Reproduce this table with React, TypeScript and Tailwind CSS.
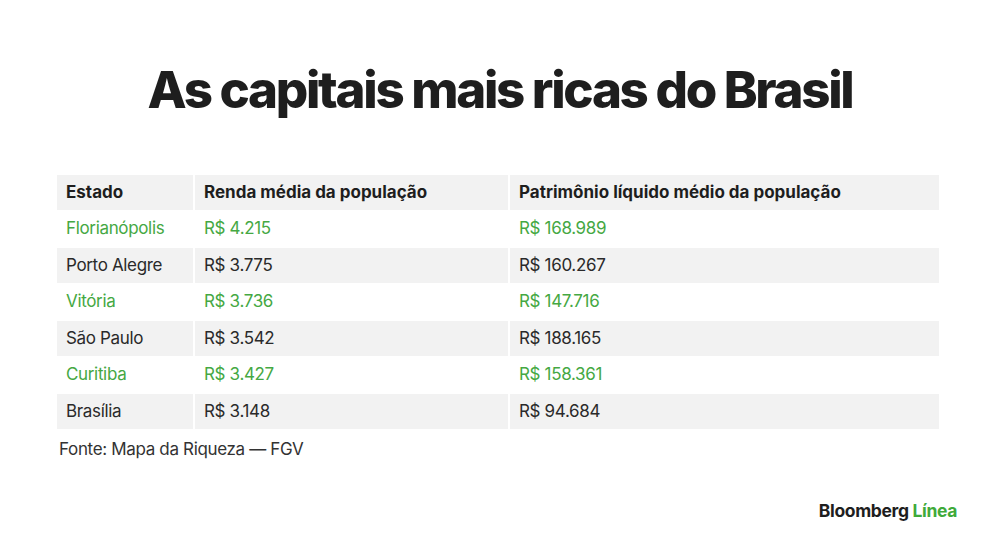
import React from "react";

const ROWS = [
  { estado: "Florianópolis", renda: "R$ 4.215", patrimonio: "R$ 168.989", green: true },
  { estado: "Porto Alegre", renda: "R$ 3.775", patrimonio: "R$ 160.267", green: false },
  { estado: "Vitória", renda: "R$ 3.736", patrimonio: "R$ 147.716", green: true },
  { estado: "São Paulo", renda: "R$ 3.542", patrimonio: "R$ 188.165", green: false },
  { estado: "Curitiba", renda: "R$ 3.427", patrimonio: "R$ 158.361", green: true },
  { estado: "Brasília", renda: "R$ 3.148", patrimonio: "R$ 94.684", green: false },
];

export default function App() {
  return (
    <div className="w-[1000px] h-[555px] bg-white relative font-['Inter',sans-serif] text-[#222]">
      <h1 className="pt-[59px] text-center text-[51px] leading-[62px] font-extrabold tracking-[-0.045em] text-[#1e1e1e]">
        As capitais mais ricas do Brasil
      </h1>

      <div className="ml-[57px] mt-[54px] grid grid-cols-[136px_313px_429px] gap-x-[2px] gap-y-[1.5px]">
        {["Estado", "Renda média da população", "Patrimônio líquido médio da população"].map((h) => (
          <div key={h} className="h-[35px] bg-[#f2f2f2] flex items-center pl-[9px] text-[17px] font-bold tracking-[0em] text-[#1e1e1e]">
            {h}
          </div>
        ))}
        {ROWS.map((r, i) => {
          const bg = i % 2 === 1 ? "bg-[#f2f2f2]" : "bg-white";
          const color = r.green ? "text-[#45a843]" : "text-[#2a2a2a]";
          return [r.estado, r.renda, r.patrimonio].map((v, j) => (
            <div key={`${i}-${j}`} className={`h-[35px] ${bg} ${color} flex items-center pl-[9px] text-[17px] tracking-[-0.02em]`}>
              {v}
            </div>
          ));
        })}
      </div>

      <p className="ml-[59px] mt-[8px] text-[17px] tracking-[-0.02em] text-[#333]">Fonte: Mapa da Riqueza — FGV</p>

      <div className="absolute right-[43px] bottom-[31px] text-[17.5px] font-bold tracking-[-0.02em]">
        <span className="text-[#1e1e1e]">Bloomberg </span>
        <span className="text-[#3faa3a]">Línea</span>
      </div>
    </div>
  );
}
